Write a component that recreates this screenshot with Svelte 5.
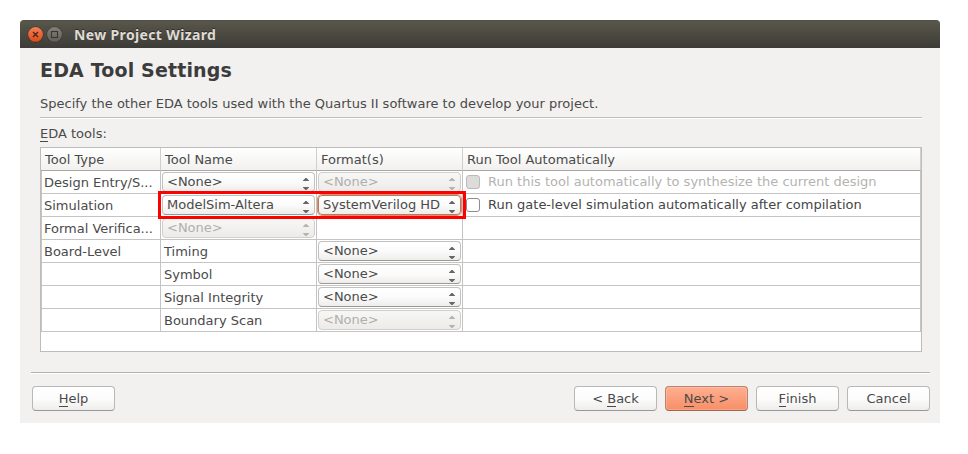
<script>
  const rows = [
    { type: 'Design Entry/S...', name: { combo: '<None>' }, format: { combo: '<None>', disabled: true }, run: { label: 'Run this tool automatically to synthesize the current design', disabled: true } },
    { type: 'Simulation', name: { combo: 'ModelSim-Altera' }, format: { combo: 'SystemVerilog HD', focus: true }, run: { label: 'Run gate-level simulation automatically after compilation' } },
    { type: 'Formal Verifica...', name: { combo: '<None>', disabled: true } },
    { type: 'Board-Level', name: { text: 'Timing' }, format: { combo: '<None>' } },
    { type: '', name: { text: 'Symbol' }, format: { combo: '<None>' } },
    { type: '', name: { text: 'Signal Integrity' }, format: { combo: '<None>' } },
    { type: '', name: { text: 'Boundary Scan' }, format: { combo: '<None>', disabled: true } }
  ];
</script>

{#snippet field(f)}
  {#if f?.combo}
    <div class="combo" class:disabled={f.disabled} class:focus={f.focus}>
      <span>{f.combo}</span>
      <svg width="6" height="12" viewBox="0 0 6 12"><path d="M0 3V2.4L2.5 0h1L6 2.4V3zM0 9v.6L2.5 12h1L6 9.6V9z" fill="currentColor" /></svg>
    </div>
  {:else if f?.text}
    <span class="plain">{f.text}</span>
  {/if}
{/snippet}

<div class="window">
  <div class="titlebar">
    <svg width="38" height="18" viewBox="0 0 38 18">
      <defs>
        <linearGradient id="close" x2="0" y2="1"><stop stop-color="#f58058" /><stop offset="1" stop-color="#df4a16" /></linearGradient>
        <linearGradient id="max" x2="0" y2="1"><stop stop-color="#85827a" /><stop offset="1" stop-color="#5f5d57" /></linearGradient>
      </defs>
      <circle cx="8.5" cy="8.5" r="8" fill="#35342f" />
      <circle cx="8.5" cy="8.4" r="7.4" fill="url(#close)" />
      <path d="M6 6l5 5M11 6l-5 5" stroke="#4a2517" stroke-width="1.3" />
      <circle cx="27.5" cy="8.5" r="8" fill="#3a3935" />
      <circle cx="27.5" cy="8.4" r="7.4" fill="url(#max)" />
      <rect x="24.5" y="5.5" width="6" height="6" fill="none" stroke="#383733" stroke-width="1.1" />
    </svg>
    <span class="wtitle">New Project Wizard</span>
  </div>
  <div class="body">
    <h1>EDA Tool Settings</h1>
    <p class="desc">Specify the other EDA tools used with the Quartus II software to develop your project.</p>
    <div class="label"><u>E</u>DA tools:</div>
    <div class="table">
      <div class="row head">
        <div>Tool Type</div><div>Tool Name</div><div>Format(s)</div><div>Run Tool Automatically</div>
      </div>
      {#each rows as r}
        <div class="row">
          <div class="type">{r.type}</div>
          <div>{@render field(r.name)}</div>
          <div>{@render field(r.format)}</div>
          <div>
            {#if r.run}
              <div class="check" class:disabled={r.run.disabled}><i></i><span>{r.run.label}</span></div>
            {/if}
          </div>
        </div>
      {/each}
      <div class="highlight"></div>
    </div>
  </div>
  <div class="footer">
    <div class="btn help"><span><u>H</u>elp</span></div>
    <div class="btn"><span>&lt; <u>B</u>ack</span></div>
    <div class="btn primary"><span><u>N</u>ext &gt;</span></div>
    <div class="btn"><span><u>F</u>inish</span></div>
    <div class="btn"><span>Cancel</span></div>
  </div>
</div>

<style>
  :global(body) { background: #fff; }
  .window {
    box-sizing: border-box;
    width: 920px;
    height: 403px;
    margin: 20px;
    background: #f2f1ef;
    border-radius: 4px 4px 0 0;
    font: 13px/16px "DejaVu Sans", sans-serif;
    color: #4a4a4a;
    white-space: nowrap;
  }
  .window * { box-sizing: border-box; }
  .titlebar {
    height: 28px;
    padding-left: 7px;
    display: flex;
    align-items: center;
    background: linear-gradient(#59574b, #3c3b37);
    border-top: 1px solid #504f43;
    border-radius: 4px 4px 0 0;
  }
  .wtitle {
    margin-left: 9px;
    font: bold 14px/18px "Noto Sans", sans-serif;
    letter-spacing: 0.36px;
    color: #dfdbd2;
    text-shadow: 0 -1px #2b2a27;
  }
  .body { padding: 0 18px 0 20px; }
  h1 { margin: 0; padding-top: 10px; font-size: 19px; letter-spacing: 0.15px; line-height: 24px; color: #3c3c3c; }
  .desc { margin: 0; padding-top: 14px; height: 36px; border-bottom: 1px solid #c0bfbd; box-shadow: 0 1px #fff; }
  .label { height: 29px; padding-top: 8px; }
  u { text-decoration: none; border-bottom: 1px solid currentColor; display: inline-block; height: 16px; line-height: 16px; vertical-align: top; }
  .table {
    position: relative;
    height: 205px;
    background: #fff;
    border: 1px solid #bdbcba;
  }
  .row {
    display: grid;
    grid-template-columns: 119px 156px 146px 1fr;
    height: 23px;
    border-left: 1px solid #c6c5c3;
  }
  .row > div {
    border-right: 1px solid #c4c4c4;
    border-bottom: 1px solid #c4c4c4;
    padding: 1px;
    min-width: 0;
  }
  .row > div:first-child { margin-left: -1px; }
  .row > .type { padding: 4px 0 0 3px; }
  .row.head { border-left: 0; grid-template-columns: 120px 156px 146px 1fr; background: linear-gradient(#fff, #f1f0ee); }
  .row.head > div { padding: 4px 0 0 4px; border-bottom-color: #a9a8a6; border-right-color: #d0cfcd; }
  .row.head > div:first-child { margin-left: 0; }
  .plain { display: block; padding: 3px 0 0 2px; }
  .combo {
    height: 20px;
    display: flex;
    justify-content: space-between;
    align-items: center;
    padding: 0 5px 0 4px;
    border: 1px solid #c2c1be;
    border-bottom-color: #9a9996;
    border-radius: 4px;
    background: linear-gradient(#fff, #fbfbfb 50%, #eeedeb);
    color: #4a4a4a;
  }
  .combo svg { margin-top: 4px; color: #666; flex: none; }
  .combo.disabled { color: #b1afac; border-color: #d0cfcd; background: linear-gradient(#f7f7f6, #ecebe9); }
  .combo.disabled svg { color: #b5b3b0; }
  .combo.focus { border-color: #aa7e68; box-shadow: 0 0 0 1px #ed8a63; }
  .check { display: flex; align-items: center; height: 20px; padding-left: 2px; color: #454545; }
  .check i {
    width: 14px;
    height: 14px;
    margin: 0 8px 0 0;
    border: 1px solid #8d8c8a;
    border-radius: 3px;
    background: #fff;
  }
  .check.disabled { color: #b5b3b0; }
  .check.disabled i { background: #dddcda; border-color: #bcbbb8; }
  .highlight {
    position: absolute;
    left: 117px;
    top: 43px;
    width: 308px;
    height: 28px;
    border: 3px solid #ff0000;
  }
  .footer {
    display: flex;
    gap: 8px;
    margin: 20px 10px 0 11px;
    padding: 13px 0 0 1px;
    border-top: 1px solid #b1b0ae;
    box-shadow: inset 0 1px #fff;
  }
  .btn {
    width: 83px;
    height: 25px;
    padding-top: 4px;
    text-align: center;
    border: 1px solid #b9b8b5;
    border-bottom-color: #999896;
    border-radius: 4px;
    background: linear-gradient(#fff, #fcfcfc 50%, #eeedec);
  }
  .help { margin-right: auto; }
  .primary { background: linear-gradient(#ffae91, #f68f67); border-color: #b98370; border-bottom-color: #a06450; box-shadow: inset 0 0 0 1px #ffffff30; }
</style>
